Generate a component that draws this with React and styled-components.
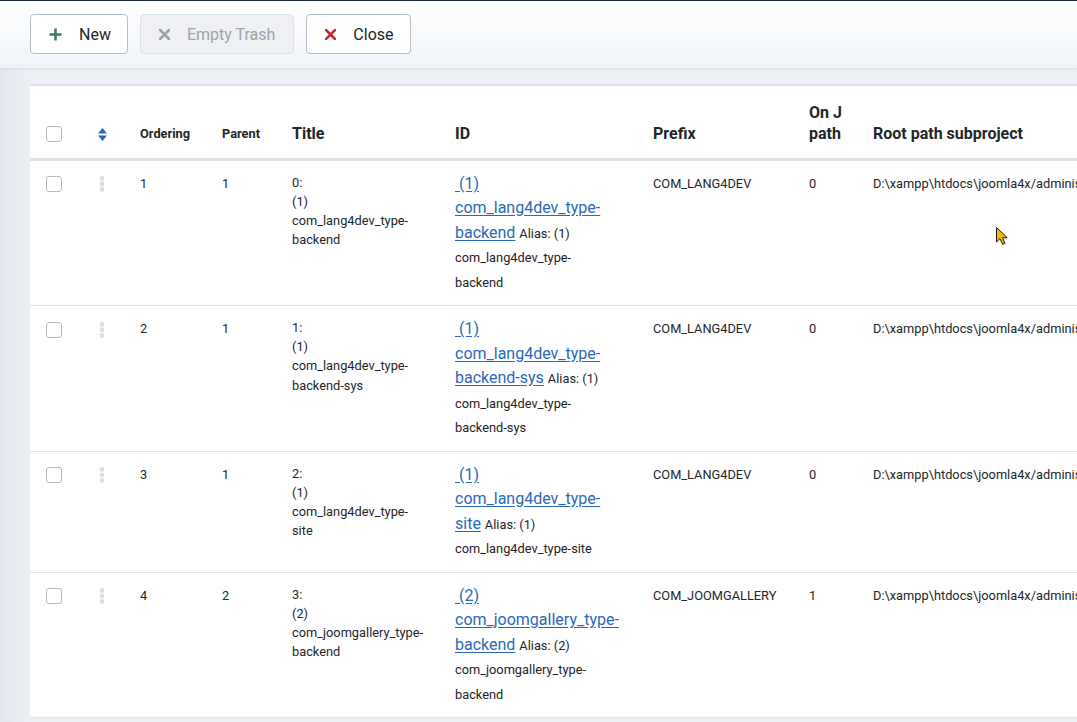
import React from 'react';
import styled, { createGlobalStyle } from 'styled-components';

const GlobalStyle = createGlobalStyle`
  html, body {
    margin: 0;
    padding: 0;
    overflow: hidden;
  }
  body {
    font-family: Roboto, "Liberation Sans", sans-serif;
    color: #22262a;
    background: linear-gradient(90deg, #e3e8f0 0px, #ecf0f5 30px, #ecf0f5 100%);
  }
`;

const Page = styled.div`
  position: relative;
  width: 1077px;
  height: 722px;
  overflow: hidden;
  border-top: 1px solid #1c2a3e;
  box-sizing: border-box;
`;

const Toolbar = styled.div`
  display: flex;
  gap: 12px;
  padding: 13px 30px 14px;
  background: linear-gradient(180deg, #ffffff 0%, #f6f8fb 60%, #eff3f8 100%);
  box-shadow: 0 1px 2px rgba(150, 165, 190, 0.25);
`;

const ToolButton = styled.button`
  display: flex;
  align-items: center;
  gap: 17px;
  height: 40px;
  padding: 0 ${(p) => (p.disabled ? '18px' : '16px')} 0 18px;
  box-sizing: border-box;
  border-radius: 4px;
  font-family: inherit;
  font-size: 16px;
  border: 1px solid ${(p) => (p.disabled ? '#dfe3e8' : '#b4bcc6')};
  background: ${(p) => (p.disabled ? '#eef0f3' : '#ffffff')};
  color: ${(p) => (p.disabled ? '#9da3aa' : '#22262a')};
  svg {
    display: block;
  }
`;

const Main = styled.div`
  margin: 16px 0 0 30px;
  background: #ffffff;
  overflow: hidden;
`;

const Table = styled.table`
  width: 1320px;
  table-layout: fixed;
  border-collapse: collapse;
  border-top: 2px solid #dfe3e7;
`;

const Th = styled.th`
  height: 74px;
  padding: 0 12px 14px;
  vertical-align: bottom;
  text-align: ${(p) => (p.center ? 'center' : 'left')};
  font-size: ${(p) => (p.small ? '12.8px' : '16px')};
  line-height: ${(p) => (p.small ? '20px' : '21px')};
  font-weight: 700;
  color: #22262a;
  border-bottom: 3px solid #dfe3e7;
  box-sizing: border-box;
`;

const Tr = styled.tr`
  border-bottom: 1px solid #e1e3e6;
`;

const Td = styled.td`
  padding: 11px 12px 11px;
  vertical-align: top;
  text-align: ${(p) => (p.center ? 'center' : 'left')};
  font-size: ${(p) => (p.large ? '16px' : '12.8px')};
  line-height: ${(p) => (p.large ? '24.5px' : '24px')};
  color: #22262a;
  white-space: ${(p) => (p.nowrap ? 'nowrap' : 'normal')};
`;

const TitleText = styled.div`
  line-height: 19.2px;
  padding-top: 1px;
`;

const IdLink = styled.a`
  color: #2a69b8;
  font-size: 16px;
  text-decoration: underline;
  text-underline-offset: 2px;
`;

const Alias = styled.span`
  font-size: 12.8px;
  line-height: 1;
  color: #1e2226;
`;

const Check = styled.span`
  display: inline-block;
  width: 16px;
  height: 16px;
  box-sizing: border-box;
  border: 1px solid #b3b8be;
  border-radius: 3px;
  background: #fff;
  vertical-align: middle;
`;

const IconSlot = styled.span`
  display: inline-flex;
  justify-content: center;
  align-items: center;
  vertical-align: middle;
  margin-left: -2px;
`;

const Cursor = styled.svg`
  position: absolute;
  left: 995px;
  top: 225px;
`;

const PlusIcon = () => (
  <svg width="13" height="13" viewBox="0 0 13 13">
    <path d="M6.5 0.5v12M0.5 6.5h12" stroke="#42795a" strokeWidth="2.6" />
  </svg>
);

const XIcon = ({ color }) => (
  <svg width="11" height="11" viewBox="0 0 11 11">
    <path d="M1 1l9 9M10 1l-9 9" stroke={color} strokeWidth="2.6" strokeLinecap="square" />
  </svg>
);

const SortIcon = () => (
  <svg width="9" height="13" viewBox="0 0 9 13">
    <path d="M4.5 0L9 5.5H0Z M4.5 13L0 7.5H9Z" fill="#2a69b8" />
  </svg>
);

const DragIcon = () => (
  <svg width="6" height="16" viewBox="0 0 6 16">
    <circle cx="3" cy="2.5" r="2.4" fill="#dcdee1" />
    <circle cx="3" cy="8" r="2.4" fill="#dcdee1" />
    <circle cx="3" cy="13.5" r="2.4" fill="#dcdee1" />
  </svg>
);

const rows = [
  {
    ordering: 1,
    parent: 1,
    title: ['0:', '(1)', 'com_lang4dev_type-', 'backend'],
    link: ['(1)', 'com_lang4dev_type-', 'backend'],
    alias: ['(1)', 'com_lang4dev_type-', 'backend'],
    prefix: 'COM_LANG4DEV',
    onj: 0,
  },
  {
    ordering: 2,
    parent: 1,
    title: ['1:', '(1)', 'com_lang4dev_type-', 'backend-sys'],
    link: ['(1)', 'com_lang4dev_type-', 'backend-sys'],
    alias: ['(1)', 'com_lang4dev_type-', 'backend-sys'],
    prefix: 'COM_LANG4DEV',
    onj: 0,
  },
  {
    ordering: 3,
    parent: 1,
    title: ['2:', '(1)', 'com_lang4dev_type-', 'site'],
    link: ['(1)', 'com_lang4dev_type-', 'site'],
    alias: ['(1)', 'com_lang4dev_type-site'],
    prefix: 'COM_LANG4DEV',
    onj: 0,
  },
  {
    ordering: 4,
    parent: 2,
    title: ['3:', '(2)', 'com_joomgallery_type-', 'backend'],
    link: ['(2)', 'com_joomgallery_type-', 'backend'],
    alias: ['(2)', 'com_joomgallery_type-', 'backend'],
    prefix: 'COM_JOOMGALLERY',
    onj: 1,
  },
];

const rootPath = 'D:\\xampp\\htdocs\\joomla4x/administrator/components/com_lang4dev';

const App = () => {
  return (
    <>
      <GlobalStyle />
      <Page>
        <Toolbar>
          <ToolButton>
            <PlusIcon />
            New
          </ToolButton>
          <ToolButton disabled>
            <XIcon color="#9aa0a7" />
            Empty Trash
          </ToolButton>
          <ToolButton>
            <XIcon color="#c8262b" />
            Close
          </ToolButton>
        </Toolbar>

        <Main>
          <Table>
            <colgroup>
              <col style={{ width: 48 }} />
              <col style={{ width: 50 }} />
              <col style={{ width: 82 }} />
              <col style={{ width: 70 }} />
              <col style={{ width: 163 }} />
              <col style={{ width: 198 }} />
              <col style={{ width: 156 }} />
              <col style={{ width: 64 }} />
              <col />
            </colgroup>
            <thead>
              <tr>
                <Th center>
                  <Check />
                </Th>
                <Th center>
                  <IconSlot>
                    <SortIcon />
                  </IconSlot>
                </Th>
                <Th small>Ordering</Th>
                <Th small>Parent</Th>
                <Th>Title</Th>
                <Th>ID</Th>
                <Th>Prefix</Th>
                <Th>On J path</Th>
                <Th>Root path subproject</Th>
              </tr>
            </thead>
            <tbody>
              {rows.map((r, i) => (
                <Tr key={i}>
                  <Td center>
                    <Check />
                  </Td>
                  <Td center>
                    <IconSlot>
                      <DragIcon />
                    </IconSlot>
                  </Td>
                  <Td>{r.ordering}</Td>
                  <Td>{r.parent}</Td>
                  <Td>
                    <TitleText>
                      {r.title.map((t, k) => (
                        <div key={k}>{t}</div>
                      ))}
                    </TitleText>
                  </Td>
                  <Td large>
                    <IdLink href="#">
                      {'\u00a0' + r.link[0]}
                      <br />
                      {r.link[1]}
                      <br />
                      {r.link[2]}
                    </IdLink>{' '}
                    <Alias>
                      Alias: {r.alias[0]}
                      {r.alias.slice(1).map((a, k) => (
                        <React.Fragment key={k}>
                          <br />
                          {a}
                        </React.Fragment>
                      ))}
                    </Alias>
                  </Td>
                  <Td>{r.prefix}</Td>
                  <Td>{r.onj}</Td>
                  <Td nowrap>{rootPath}</Td>
                </Tr>
              ))}
            </tbody>
          </Table>
        </Main>

        <Cursor width="14" height="20" viewBox="0 0 14 20">
          <path
            d="M1.5 1.5V16L5 12.6L7.6 18.4L10 17.3L7.5 11.7H12.2Z"
            fill="#f6b800"
            stroke="#1a1a1a"
            strokeWidth="1"
            strokeLinejoin="round"
          />
        </Cursor>
      </Page>
    </>
  );
};

export default App;
